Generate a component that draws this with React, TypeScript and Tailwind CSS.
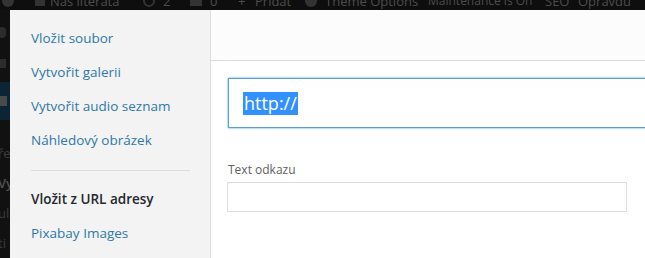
import React from "react";

const font = { fontFamily: '"Open Sans", "Noto Sans", sans-serif' };

export default function App() {
  const menu1 = ["Vložit soubor", "Vytvořit galerii", "Vytvořit audio seznam", "Náhledový obrázek"];
  return (
    <div className="w-[645px] h-[258px] overflow-hidden bg-[#0f0f0f] flex flex-col" style={font}>
      {/* admin bar behind overlay */}
      <div className="h-[10px] shrink-0 overflow-hidden flex items-end text-[13px] leading-[20px] text-[#4d4d4d] bg-[#0e0e0e]">
        <div className="flex items-center -mb-[1px] whitespace-nowrap">
          <span className="w-[35px] shrink-0 flex"><span className="ml-[2px] inline-block w-[12px] h-[12px] rounded-full bg-[#333]" /></span>
          <span className="w-[15px] shrink-0 flex"><span className="inline-block w-[10px] h-[10px] bg-[#333]" /></span>
          <span className="w-[93px] shrink-0">Náš literata</span>
          <span className="w-[20px] shrink-0 flex"><span className="inline-block w-[12px] h-[12px] rounded-full border-2 border-[#333]" /></span>
          <span className="w-[27px] shrink-0">2</span>
          <span className="w-[20px] shrink-0 flex"><span className="inline-block w-[12px] h-[10px] bg-[#333]" /></span>
          <span className="w-[28px] shrink-0">0</span>
          <span className="w-[17px] shrink-0">+</span>
          <span className="w-[50px] shrink-0">Přidat</span>
          <span className="w-[20px] shrink-0 flex"><span className="inline-block w-[12px] h-[12px] rounded-full bg-[#333]" /></span>
          <span className="w-[103px] shrink-0 overflow-hidden text-[13px]">Theme Options</span>
          <span className="w-[117px] shrink-0 overflow-hidden text-[12px]">Maintenance is On</span>
          <span className="w-[33px] shrink-0 overflow-hidden text-[13px]">SEO</span>
          <span className="shrink-0 text-[13px]">Opravdu</span>
        </div>
      </div>
      <div className="flex flex-1 min-h-0">
        {/* admin menu strip behind overlay */}
        <div className="w-[10px] shrink-0 flex flex-col overflow-hidden text-[13px] text-[#3c3c3c] bg-[#111]">
          <div className="h-[18px]" />
          <div className="h-[12px] w-[8px] rounded-full bg-[#2c2c2c] ml-[-2px]" />
          <div className="h-[22px]" />
          <div className="h-[10px] w-[8px] bg-[#2c2c2c] ml-[-2px]" />
          <div className="h-[15px]" />
          <div className="h-[40px] bg-[#0b2535] flex items-center">
            <div className="h-[10px] w-[8px] bg-[#4a4a4a] ml-[-1px]" />
          </div>
          <div className="mt-[18px] leading-[30px] ml-[-2px] whitespace-nowrap">
            <div>ře</div>
            <div className="text-[#505050] font-semibold">Vy</div>
            <div>ul</div>
            <div>ti</div>
          </div>
        </div>
        {/* modal */}
        <div className="flex flex-1 min-w-0">
          <div className="w-[201px] shrink-0 bg-[#f3f3f3] border-r border-[#dddddd] pl-[21px] pr-[20px] pt-[11px]">
            {menu1.map((t) => (
              <div key={t} className="h-[34px] flex items-center text-[13.5px] text-[#2f78a8] whitespace-nowrap">
                {t}
              </div>
            ))}
            <div className="mt-[13px] mb-[11px] h-px bg-[#dddddd]" />
            <div className="h-[34px] flex items-center text-[13.5px] text-[#23282d] font-semibold whitespace-nowrap">
              Vložit z URL adresy
            </div>
            <div className="h-[34px] flex items-center text-[13.5px] text-[#2f78a8] whitespace-nowrap">
              Pixabay Images
            </div>
          </div>
          <div className="flex-1 min-w-0 bg-white flex flex-col">
            <div className="h-[51px] shrink-0 border-b border-[#dddddd] bg-[#fcfcfc]" />
            <div className="pl-[17px] pt-[17px]">
              <div className="h-[50px] w-[460px] border border-[#5b9dd9] shadow-[0_0_2px_rgba(30,140,190,0.8)] bg-white flex items-center pl-[14px]">
                <span className="bg-[#3390ff] text-white text-[18px] leading-[23px] px-[1px]">http://</span>
              </div>
              <div className="mt-[34px] text-[12px] leading-[16px] text-[#5f5f5f]">Text odkazu</div>
              <div className="mt-[4px] -ml-px h-[30px] w-[400px] border border-[#dddddd] bg-white" />
            </div>
          </div>
        </div>
      </div>
    </div>
  );
}
